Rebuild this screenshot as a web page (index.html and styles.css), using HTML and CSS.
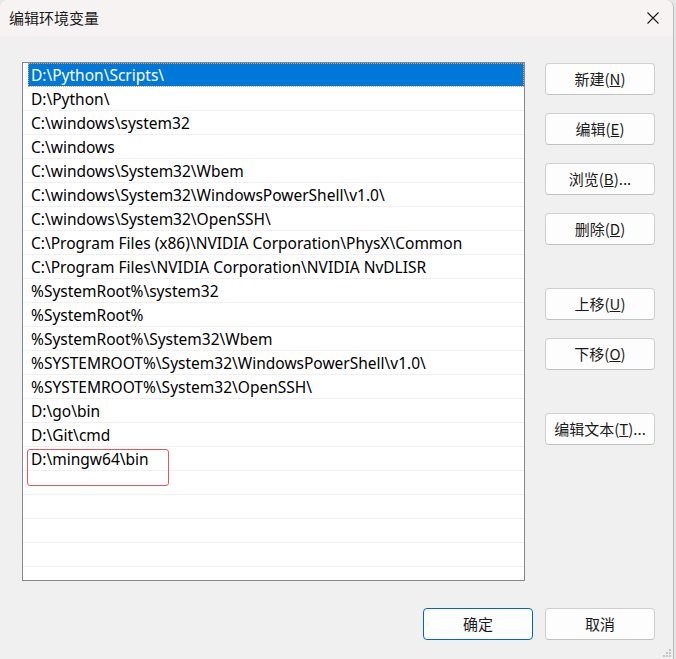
FILE: index.html
```html
<!DOCTYPE html>
<html lang="zh-CN">
<head>
<meta charset="utf-8">
<title>编辑环境变量</title>
<link rel="stylesheet" href="styles.css">
</head>
<body>
<div class="window">
  <div class="titlebar">
    <span class="title">编辑环境变量</span>
    <svg class="close" width="12" height="12" viewBox="0 0 12 12"><path d="M0.5 0.5 L11.5 11.5 M11.5 0.5 L0.5 11.5" stroke="#1a1a1a" stroke-width="1.1" fill="none"/></svg>
  </div>
  <div class="content">
    <div class="listbox">
      <div class="row selected"><span class="cell">D:\Python\Scripts\</span></div>
      <div class="row"><span class="cell">D:\Python\</span></div>
      <div class="row"><span class="cell">C:\windows\system32</span></div>
      <div class="row"><span class="cell">C:\windows</span></div>
      <div class="row"><span class="cell">C:\windows\System32\Wbem</span></div>
      <div class="row"><span class="cell">C:\windows\System32\WindowsPowerShell\v1.0\</span></div>
      <div class="row"><span class="cell">C:\windows\System32\OpenSSH\</span></div>
      <div class="row"><span class="cell">C:\Program Files (x86)\NVIDIA Corporation\PhysX\Common</span></div>
      <div class="row"><span class="cell">C:\Program Files\NVIDIA Corporation\NVIDIA NvDLISR</span></div>
      <div class="row"><span class="cell">%SystemRoot%\system32</span></div>
      <div class="row"><span class="cell">%SystemRoot%</span></div>
      <div class="row"><span class="cell">%SystemRoot%\System32\Wbem</span></div>
      <div class="row"><span class="cell">%SYSTEMROOT%\System32\WindowsPowerShell\v1.0\</span></div>
      <div class="row"><span class="cell">%SYSTEMROOT%\System32\OpenSSH\</span></div>
      <div class="row"><span class="cell">D:\go\bin</span></div>
      <div class="row"><span class="cell">D:\Git\cmd</span></div>
      <div class="row"><span class="cell">D:\mingw64\bin</span></div>
      <div class="row"></div>
      <div class="row"></div>
      <div class="row"></div>
      <div class="row"></div>
      <div class="row"></div>
      <div class="highlight"></div>
    </div>
    <div class="side">
      <button class="btn">新建(<u>N</u>)</button>
      <button class="btn">编辑(<u>E</u>)</button>
      <button class="btn">浏览(<u>B</u>)...</button>
      <button class="btn">删除(<u>D</u>)</button>
      <button class="btn group">上移(<u>U</u>)</button>
      <button class="btn">下移(<u>O</u>)</button>
      <button class="btn group">编辑文本(<u>T</u>)...</button>
    </div>
  </div>
  <div class="footer">
    <button class="btn default">确定</button>
    <button class="btn">取消</button>
  </div>
  <svg class="grip" width="10" height="10" viewBox="0 0 10 10">
    <rect x="7" y="1" width="2" height="2" fill="#c4c4c4"/>
    <rect x="4" y="4" width="2" height="2" fill="#c4c4c4"/>
    <rect x="7" y="4" width="2" height="2" fill="#c4c4c4"/>
    <rect x="1" y="7" width="2" height="2" fill="#c4c4c4"/>
    <rect x="4" y="7" width="2" height="2" fill="#c4c4c4"/>
    <rect x="7" y="7" width="2" height="2" fill="#c4c4c4"/>
  </svg>
</div>
</body>
</html>
```
FILE: styles.css
```css
html, body {
  margin: 0;
  padding: 0;
}
body {
  background: #e6e6e6;
  width: 676px;
  height: 659px;
  overflow: hidden;
  font-family: "Noto Sans", "Noto Sans CJK SC", sans-serif;
  font-size: 15px;
  color: #000;
}
.window {
  position: relative;
  width: 673px;
  height: 659px;
  background: #f0f0f0;
  border-right: 1px solid #b9b9b9;
  border-top-left-radius: 8px;
  border-top-right-radius: 8px;
  overflow: hidden;
  display: flex;
  flex-direction: column;
}
.titlebar {
  height: 36px;
  flex: none;
  background: #f7f3f2;
  display: flex;
  align-items: center;
  justify-content: space-between;
  padding: 0 14px 0 9px;
}
.title {
  font-family: "Noto Sans CJK SC", sans-serif;
  font-size: 15px;
  color: #1a1a1a;
  margin-top: -2px;
}
.close {
  margin-top: -1px;
}
.content {
  display: flex;
  align-items: flex-start;
  padding: 26px 0 0 22px;
}
.listbox {
  position: relative;
  width: 501px;
  height: 517px;
  border: 1px solid #828790;
  background: #fff;
  overflow: hidden;
  flex: none;
}
.row {
  height: 23px;
  border-bottom: 1px solid #f0f0f0;
  display: flex;
  align-items: center;
}
.cell {
  padding-left: 8px;
  padding-top: 2px;
  white-space: nowrap;
  font-size: 15.5px;
  line-height: 21px;
}
.row.selected {
  margin-left: 5px;
  background: #0078d7;
  color: #fff;
  outline: 1px dotted #e7a15a;
  outline-offset: -1px;
}
.row.selected .cell {
  padding-left: 3px;
}
.highlight {
  position: absolute;
  left: 4px;
  top: 386px;
  width: 140px;
  height: 35px;
  border: 1.5px solid #e9555a;
  border-radius: 3px;
}
.side {
  display: flex;
  flex-direction: column;
  margin-left: 20px;
  margin-top: 1px;
  gap: 18px;
}
.btn {
  width: 110px;
  height: 32px;
  box-sizing: border-box;
  background: #fdfdfd;
  border: 1px solid #d0d0d0;
  border-bottom-color: #c2c2c2;
  border-radius: 4px;
  font-family: "Noto Sans CJK SC", sans-serif;
  font-size: 15px;
  color: #1a1a1a;
  padding: 0;
  line-height: 30px;
}
.btn.group {
  margin-top: 25px;
}
.footer {
  display: flex;
  justify-content: flex-end;
  gap: 12px;
  padding: 27px 18px 0 0;
}
.btn.default {
  border: 1px solid #0067c0;
}
.grip {
  position: absolute;
  right: 1px;
  bottom: 1px;
}
```
